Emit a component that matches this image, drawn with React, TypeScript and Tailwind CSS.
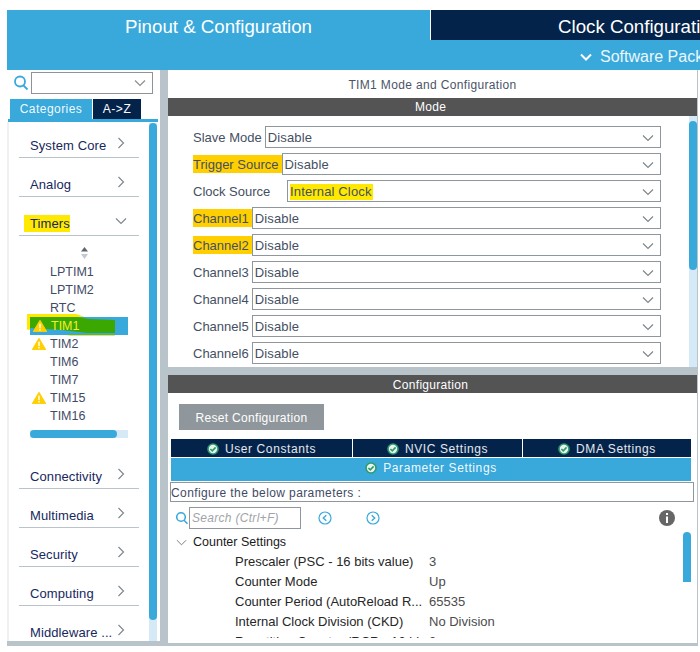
import React from "react";

const FONT = "font-['Liberation_Sans',Arial,sans-serif]";

function Chevron({ dir = "down", className = "", color = "#7f8a90", w = 14, h = 14, sw = 1.2 }: { dir?: "down" | "right"; className?: string; color?: string; w?: number; h?: number; sw?: number }) {
  return (
    <svg width={w} height={h} viewBox="0 0 14 14" className={className} fill="none" stroke={color} strokeWidth={sw}>
      {dir === "down" ? <path d="M2 4.5 L7 9.5 L12 4.5" /> : <path d="M4.5 2 L9.5 7 L4.5 12" />}
    </svg>
  );
}

function Warn({ className = "" }: { className?: string }) {
  return (
    <svg width="14" height="12" viewBox="0 0 14 12" className={className}>
      <path d="M7 0.3 L13.8 11.7 L0.2 11.7 Z" fill="#ffcf00" stroke="#ffcf00" strokeLinejoin="round" />
      <rect x="6.3" y="3.6" width="1.4" height="4.6" fill="#fff" />
      <rect x="6.3" y="9" width="1.4" height="1.5" fill="#fff" />
    </svg>
  );
}

function Check() {
  return (
    <svg width="12" height="12" viewBox="0 0 12 12" className="shrink-0">
      <circle cx="6" cy="6" r="5.8" fill="#2f9a6c" />
      <circle cx="6" cy="6" r="4.2" fill="#e6f3ee" />
      <path d="M3.4 6 L5.3 7.9 L8.6 4.4" fill="none" stroke="#2f9a6c" strokeWidth="1.6" />
    </svg>
  );
}

function NavCategory({ label, open, hl }: { label: string; open?: boolean; hl?: boolean }) {
  return (
    <div className="mx-[10px] w-[120px] h-[39px] shrink-0 border-b border-[#b8c4ca] flex items-end relative">
      <span className={`mb-[3px] text-[13px] leading-[17px] tracking-[0.1px] whitespace-nowrap text-[#16285e] ${hl ? "bg-[#ffe900] ml-[5px] pl-[6px]" : "ml-[11px]"}`}>{label}</span>
      <Chevron dir={open ? "down" : "right"} className="absolute right-[11px] bottom-[7px]" color="#808890" />
    </div>
  );
}

function TreeRow({ label, warn, selected }: { label: string; warn?: boolean; selected?: boolean }) {
  return (
    <div className="h-[18px] w-[98px] ml-[21px] flex items-center relative">
      {warn && <Warn className={`absolute ${selected ? "left-[3px]" : "left-[2px]"} top-[3px] z-10`} />}
      <span className={`${selected ? "ml-[21px]" : "ml-[20px]"} text-[12.5px] leading-[18px] relative z-10 ${selected ? "text-[#f4ee30]" : "text-[#3f4a66]"}`}>{label}</span>
    </div>
  );
}

function LeftPanel() {
  return (
    <div className="w-[153px] h-[571px] bg-white shrink-0 flex flex-col overflow-hidden">
      <div className="h-[29px] shrink-0 flex items-start pt-[2px] pl-[6px] gap-[2px]">
        <svg width="16" height="18" viewBox="0 0 16 18" className="mt-[2px]" fill="none" stroke="#39a9dc" strokeWidth="1.8">
          <circle cx="7" cy="7.5" r="5" />
          <path d="M10.5 11.5 L14.5 15.5" />
        </svg>
        <div className="w-[122px] h-[22px] border border-[#8c9499] flex items-center justify-end pr-[5px]">
          <Chevron color="#8a8f94" />
        </div>
      </div>
      <div className="h-[20px] shrink-0 flex pl-[3px] items-stretch">
        <div className="w-[82px] bg-[#39a9dc] text-white/95 text-[12px] tracking-[0.45px] flex items-center justify-center">Categories</div>
        <div className="w-px" />
        <div className="w-[48px] bg-[#03234b] text-white text-[12px] tracking-[0.6px] flex items-center justify-center">A-&gt;Z</div>
      </div>
      <div className="h-[3px] shrink-0 bg-[#39a9dc] mx-[1px] w-[150px]" />
      <div className="flex-1 min-h-0 flex border-l-[2px] border-[#eef0f1]">
        <div className="w-[140px] shrink-0 overflow-hidden flex flex-col">
          <div className="-mt-[3px]" />
          <NavCategory label="System Core" />
          <NavCategory label="Analog" />
          <NavCategory label="Timers" open hl />
          <div className="h-[15px] shrink-0 mt-[11px] flex justify-center w-[150px]">
            <svg width="9" height="13" viewBox="0 0 9 13" className="ml-[1px]">
              <path d="M4.5 0 L8 4.5 L1 4.5 Z" fill="#5e666c" />
              <path d="M1 7 L8 7 L4.5 12 Z" fill="#c4cacd" />
            </svg>
          </div>
          <div className="relative mt-[1px] h-[162px] shrink-0">
            <div className="absolute left-[18px] top-[51px] w-[88px] h-[22px] bg-[#ffe900]" style={{ clipPath: "polygon(0 0,56% 0,100% 60%,100% 100%,50% 100%,0 70%)" }} />
            <div className="absolute left-[21px] top-[54px] w-[98px] h-[18px] bg-[#39a9dc]" />
            <svg width="88" height="22" viewBox="0 0 88 22" className="absolute left-[18px] top-[51px]">
              <path d="M3 3 L50 3 L62 5 L88 6 L88 19 L60 19 L35 16 L3 14 Z" fill="#3aa800" />
            </svg>
            <TreeRow label="LPTIM1" />
            <TreeRow label="LPTIM2" />
            <TreeRow label="RTC" />
            <TreeRow label="TIM1" warn selected />
            <TreeRow label="TIM2" warn />
            <TreeRow label="TIM6" />
            <TreeRow label="TIM7" />
            <TreeRow label="TIM15" warn />
            <TreeRow label="TIM16" />
          </div>
          <div className="ml-[21px] mt-[5px] w-[98px] h-[8px] shrink-0 bg-[#d6e9f6]">
            <div className="w-[87px] h-full bg-[#39a9dc] rounded-full" />
          </div>
          <div className="h-[12px] shrink-0" />
          <NavCategory label="Connectivity" />
          <NavCategory label="Multimedia" />
          <NavCategory label="Security" />
          <NavCategory label="Computing" />
          <NavCategory label="Middleware ..." />
        </div>
        <div className="w-[8px] shrink-0 bg-[#d6e9f6] mt-[1px]">
          <div className="w-full h-[497px] bg-[#39a9dc] rounded-full" />
        </div>
        <div className="w-[3px]" />
      </div>
    </div>
  );
}

function ModeRow({ label, value, hl, valHl, labelW }: { label: string; value: string; hl?: boolean; valHl?: boolean; labelW?: string }) {
  return (
    <div className="h-[27px] flex items-start shrink-0 pl-[25px] w-[493px]">
      <span className={`mt-[2px] text-[13px] leading-[20px] h-[18px] whitespace-nowrap text-[#454f63] ${hl ? "bg-[#ffcf00]" : ""} pr-[3px] ${labelW ?? ""}`}>{label}</span>
      <div className="flex-1 h-[22px] border border-[#8f979c] bg-white flex items-center justify-between pl-[2px] pr-[5px] pt-[2px] min-w-0">
        <span className={`text-[13px] tracking-[0.15px] leading-[16px] text-[#454f63] ${valHl ? "bg-[#ffe900] pr-[1px]" : ""}`}>{value}</span>
        <Chevron color="#7f878c" />
      </div>
    </div>
  );
}

function BarTitle({ children, extra = "" }: { children: React.ReactNode; extra?: string }) {
  return <div className={`h-[18px] shrink-0 bg-[#545454] text-white text-[12px] tracking-[0.3px] flex items-center justify-center pr-[4px] ${extra}`}>{children}</div>;
}

function ParamRow({ label, value }: { label: string; value: string }) {
  return (
    <div className="h-[20px] flex items-center text-[13px] pl-[67px] leading-[20px]">
      <span className="w-[194px] whitespace-nowrap text-[#262626]">{label}</span>
      <span className="text-[#4c4c4c]">{value}</span>
    </div>
  );
}

function TopPanel() {
  return (
    <div className="h-[297px] shrink-0 bg-white flex flex-col overflow-hidden">
      <div className="h-[28px] shrink-0 text-[12px] tracking-[0.35px] text-[#4b5468] flex items-center justify-center pt-[2px]">TIM1 Mode and Configuration</div>
      <BarTitle>Mode</BarTitle>
      <div className="flex flex-1 min-h-0">
        <div className="flex-1 flex flex-col pt-[10px] overflow-hidden">
          <ModeRow label="Slave Mode" value="Disable" />
          <ModeRow label="Trigger Source" value="Disable" hl />
          <ModeRow label="Clock Source" value="Internal Clock" valHl labelW="w-[94px]" />
          <ModeRow label="Channel1" value="Disable" hl />
          <ModeRow label="Channel2" value="Disable" hl />
          <ModeRow label="Channel3" value="Disable" />
          <ModeRow label="Channel4" value="Disable" />
          <ModeRow label="Channel5" value="Disable" />
          <ModeRow label="Channel6" value="Disable" />
        </div>
        <div className="w-[8px] shrink-0 bg-[#d6e9f6]">
          <div className="mt-[5px] h-[149px] bg-[#39a9dc] rounded-full" />
        </div>
      </div>
    </div>
  );
}

function ConfigTab({ label, w }: { label: string; w: string }) {
  return (
    <div className={`${w} bg-[#03234b] text-white/90 text-[12px] tracking-[0.6px] flex items-center justify-center gap-[6px] pt-[1px]`}>
      <Check />
      <span>{label}</span>
    </div>
  );
}

function BottomPanel() {
  return (
    <div className="flex-1 min-h-0 bg-white flex flex-col overflow-hidden">
      <BarTitle extra="pt-[1px]">Configuration</BarTitle>
      <div className="pl-[11px] pt-[11px] shrink-0">
        <div className="w-[145px] h-[26px] bg-[#90979c] text-white text-[12px] tracking-[0.3px] flex items-center justify-center pt-[1px]">Reset Configuration</div>
      </div>
      <div className="ml-[3px] mt-[9px] w-[520px] shrink-0">
        <div className="h-[18px] flex gap-px">
          <ConfigTab label="User Constants" w="w-[181px]" />
          <ConfigTab label="NVIC Settings" w="w-[169px]" />
          <ConfigTab label="DMA Settings" w="w-[168px]" />
        </div>
        <div className="h-[23px] mt-px bg-[#39a9dc] text-white/95 text-[12px] tracking-[0.6px] flex items-center justify-center gap-[6px] pb-[3px]">
          <Check />
          <span>Parameter Settings</span>
        </div>
      </div>
      <div className="ml-[2px] mt-px w-[524px] h-[20px] shrink-0 border border-[#8f979c] text-[12px] tracking-[0.4px] text-[#3f4a66] flex items-center pt-[1px]">Configure the below parameters :</div>
      <div className="h-[26px] shrink-0 flex items-center pl-[7px] mt-[3px] relative">
        <svg width="14" height="14" viewBox="0 0 14 14" fill="none" stroke="#39a9dc" strokeWidth="1.6">
          <circle cx="6" cy="6" r="4.3" />
          <path d="M9 9.2 L12.5 12.7" />
        </svg>
        <div className="w-[112px] h-[22px] border border-[#8f979c] text-[12px] italic text-[#a0a4a8] tracking-[0.3px] flex items-center pl-[2px]">Search (Ctrl+F)</div>
        <svg width="14" height="14" viewBox="0 0 14 14" className="ml-[17px]" fill="none" stroke="#39a9dc" strokeWidth="1.2">
          <circle cx="7" cy="7" r="6" />
          <path d="M8.3 4.2 L5.3 7 L8.3 9.8" strokeWidth="1.4" />
        </svg>
        <svg width="14" height="14" viewBox="0 0 14 14" className="ml-[34px]" fill="none" stroke="#39a9dc" strokeWidth="1.2">
          <circle cx="7" cy="7" r="6" />
          <path d="M5.7 4.2 L8.7 7 L5.7 9.8" strokeWidth="1.4" />
        </svg>
        <svg width="16" height="16" viewBox="0 0 16 16" className="ml-auto mr-[22px]">
          <circle cx="8" cy="8" r="8" fill="#666" />
          <rect x="7" y="3" width="2" height="2" fill="#fff" />
          <rect x="7" y="6.5" width="2" height="6.5" fill="#fff" />
        </svg>
      </div>
      <div className="flex flex-1 min-h-0 pb-[5px]">
        <div className="flex-1 overflow-hidden">
          <div className="h-[20px] mt-[1px] flex items-center pl-[7px] gap-[5px] text-[12.5px] text-[#1a1a1a]">
            <Chevron color="#6f767b" w={13} h={13} sw={1} />
            <span>Counter Settings</span>
          </div>
          <ParamRow label="Prescaler (PSC - 16 bits value)" value="3" />
          <ParamRow label="Counter Mode" value="Up" />
          <ParamRow label="Counter Period (AutoReload R..." value="65535" />
          <ParamRow label="Internal Clock Division (CKD)" value="No Division" />
          <ParamRow label="Repetition Counter (RCR - 16 bi..." value="0" />
        </div>
        <div className="w-[8px] mr-[6px] shrink-0 self-start mt-[1px] h-[50px] bg-[#39a9dc] rounded-t-full" />
      </div>
    </div>
  );
}

export default function App() {
  return (
    <div className={`${FONT} w-[700px] h-[652px] bg-white pt-[10px] pl-[7px] overflow-hidden`}>
      <div className="w-[693px] h-[30px] flex bg-[#39a9dc]">
        <div className="w-[423px] shrink-0 text-white text-[18.7px] flex items-center justify-center pt-[4px]">Pinout &amp; Configuration</div>
        <div className="w-px bg-white" />
        <div className="flex-1 bg-[#03234b] text-white text-[18.7px] whitespace-nowrap overflow-hidden pl-[127px] flex items-center pt-[4px]">Clock Configuration</div>
      </div>
      <div className="w-[693px] h-[30px] bg-[#39a9dc] flex items-center overflow-hidden pl-[572px] pt-[4px] gap-[7px] text-white/90 text-[16px] whitespace-nowrap">
        <Chevron color="#fff" sw={2} className="shrink-0" />
        <span>Software Packs</span>
      </div>
      <div className="w-[691px] h-[576px] bg-[#b8c4ca] flex gap-[8px]">
        <LeftPanel />
        <div className="w-[529px] h-[573px] flex flex-col gap-[8px]">
          <TopPanel />
          <BottomPanel />
        </div>
      </div>
    </div>
  );
}
